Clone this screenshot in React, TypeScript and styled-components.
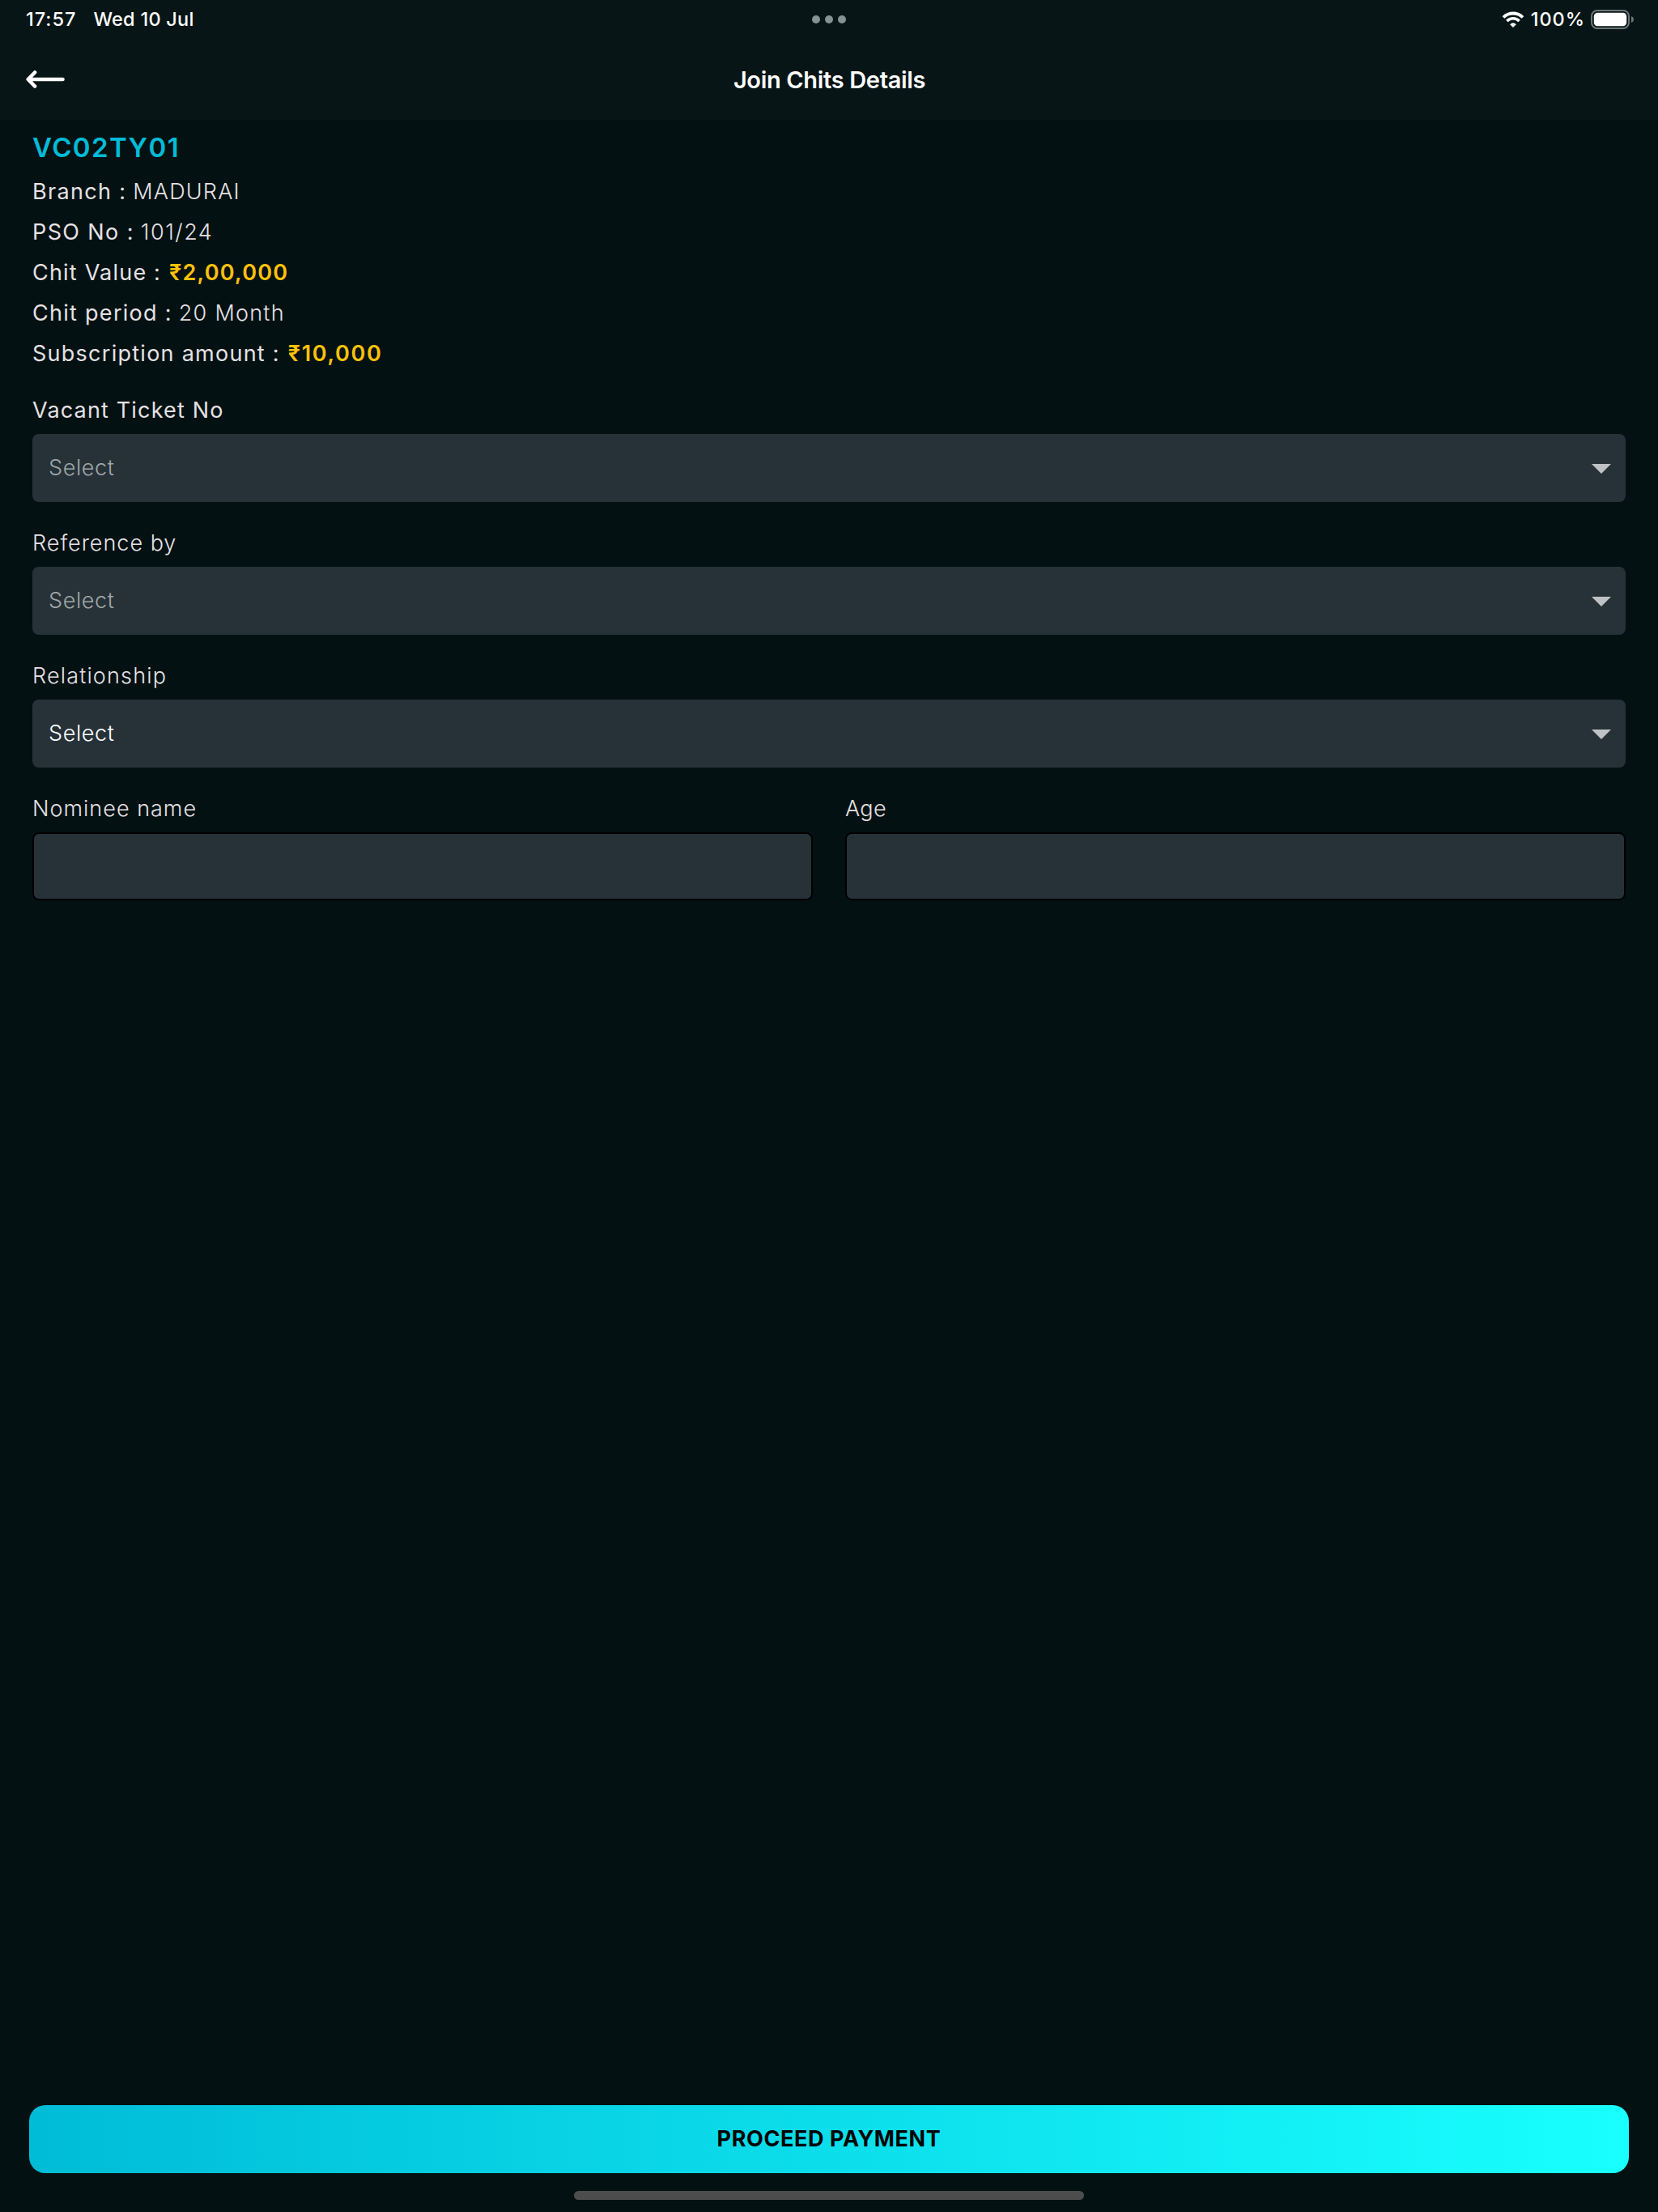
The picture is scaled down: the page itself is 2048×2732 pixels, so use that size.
import React from 'react';
import styled, { createGlobalStyle } from 'styled-components';

const GlobalStyle = createGlobalStyle`
  *, *::before, *::after {
    box-sizing: border-box;
  }
  body {
    margin: 0;
    background-color: #031112;
    font-family: Inter, 'Liberation Sans', sans-serif;
    -webkit-font-smoothing: antialiased;
  }
`;

const Screen = styled.div`
  display: flex;
  flex-direction: column;
  width: 2048px;
  height: 2732px;
  background-color: #031112;
  color: #e6e1e5;
`;

const TopArea = styled.header`
  height: 148px;
  background-color: #071516;
  color: #ffffff;
`;

const StatusBar = styled.div`
  display: grid;
  grid-template-columns: 1fr auto 1fr;
  align-items: center;
  height: 48px;
  padding: 0 30px 0 32px;
  font-size: 23.5px;
  font-weight: 500;
  line-height: 28px;
`;

const StatusLeft = styled.div`
  display: flex;
  gap: 21px;
`;

const StatusRight = styled.div`
  display: flex;
  align-items: center;
  justify-content: flex-end;
`;

const Dots = styled.div`
  display: flex;
  gap: 6px;
  padding-right: 2px;
`;

const Dot = styled.span`
  width: 10px;
  height: 10px;
  border-radius: 50%;
  background-color: #869393;
`;

const WifiIcon = styled.svg`
  width: 28px;
  height: 21px;
  margin-right: 8px;
`;

const BatteryIcon = styled.svg`
  width: 53px;
  height: 24px;
  margin-left: 7px;
`;

const NavBar = styled.div`
  display: grid;
  grid-template-columns: 1fr auto 1fr;
  align-items: center;
  height: 100px;
  padding: 0 32px;
`;

const BackButton = styled.button`
  display: flex;
  justify-self: start;
  padding: 0;
  border: 0;
  background: none;
`;

const NavTitle = styled.h1`
  margin: 0;
  padding: 2px 0 0 1px;
  font-size: 29px;
  font-weight: 620;
  line-height: 36px;
`;

const Text = styled.span<{ $spacing?: number }>`
  letter-spacing: ${({ $spacing }) => $spacing || 0}px;
  white-space: nowrap;
`;

const Content = styled.main`
  display: flex;
  flex: 1;
  flex-direction: column;
  padding: 6px 40px 0;
`;

const ChitCode = styled.h2`
  height: 58px;
  margin: 0;
  color: #00bcd7;
  font-size: 33px;
  font-weight: 640;
  line-height: 57px;
  letter-spacing: 1.4px;
`;

const DetailRow = styled.div`
  display: flex;
  height: 50px;
  font-size: 27px;
  line-height: 50px;
`;

const DetailLabel = styled(Text)`
  font-weight: 440;
`;

const DetailValue = styled(Text)<{ $amount?: boolean }>`
  margin-left: ${({ $amount }) => ($amount ? 10 : 8)}px;
  color: ${({ $amount }) => ($amount ? '#ffc107' : 'inherit')};
  font-weight: ${({ $amount }) => ($amount ? 560 : 330)};
`;

const Form = styled.form`
  display: flex;
  flex-direction: column;
  gap: 20px;
  margin-top: 14px;
`;

const FieldGroup = styled.div`
  display: grid;
  grid-template-columns: 1fr 1fr;
  gap: 40px;
`;

const Field = styled.div`
  display: flex;
  flex-direction: column;
`;

const FieldLabel = styled.label<{ $strong?: boolean }>`
  height: 60px;
  font-size: 27px;
  font-weight: ${({ $strong }) => ($strong ? 440 : 360)};
  line-height: 62px;
`;

const SelectBox = styled.div<{ $active?: boolean }>`
  display: flex;
  align-items: center;
  justify-content: space-between;
  height: 84px;
  padding: 0 18px 0 20px;
  border-radius: 8px;
  background-color: #273238;
  color: ${({ $active }) => ($active ? '#ffffff' : '#a0a7a8')};
  font-size: 27px;
  font-weight: 360;
  line-height: 84px;
`;

const Caret = styled.span`
  margin-top: 2px;
  border-top: 12px solid #bec2c4;
  border-right: 12px solid transparent;
  border-left: 12px solid transparent;
`;

const Input = styled.input`
  width: 100%;
  height: 84px;
  padding: 0 20px;
  border: 2px solid #000000;
  border-radius: 8px;
  background-color: #273238;
  color: #ffffff;
  font: 400 27px Inter, sans-serif;
`;

const Footer = styled.footer`
  display: flex;
  flex-direction: column;
  align-items: center;
  padding: 0 36px 15px;
`;

const ProceedButton = styled.button`
  width: 100%;
  height: 84px;
  padding: 0 0 2px;
  border: 0;
  border-radius: 20px;
  background: linear-gradient(90deg, #00bcd7, #18ffff);
  color: #000000;
  font-family: Inter, sans-serif;
  font-size: 27px;
  font-weight: 720;
  letter-spacing: 0.6px;
`;

const HomeIndicator = styled.div`
  width: 630px;
  height: 11px;
  margin-top: 22px;
  border-radius: 6px;
  background-color: #4d4d4d;
`;

interface Detail {
  label: string;
  labelSpacing: number;
  value: string;
  valueSpacing: number;
  amount?: boolean;
}

const details: Detail[] = [
  { label: 'Branch :', labelSpacing: 1.32, value: 'MADURAI', valueSpacing: 1.2 },
  { label: 'PSO No :', labelSpacing: 1.39, value: '101/24', valueSpacing: 1.5 },
  { label: 'Chit Value :', labelSpacing: 1.2, value: '₹2,00,000', valueSpacing: 1.26, amount: true },
  { label: 'Chit period :', labelSpacing: 1.28, value: '20 Month', valueSpacing: 1.25 },
  { label: 'Subscription amount :', labelSpacing: 1.26, value: '₹10,000', valueSpacing: 1.66, amount: true },
];

interface SelectItem {
  label: string;
  spacing: number;
  strong?: boolean;
  active?: boolean;
}

const selects: SelectItem[] = [
  { label: 'Vacant Ticket No', spacing: 1.16, strong: true },
  { label: 'Reference by', spacing: 0.98 },
  { label: 'Relationship', spacing: 1.16, active: true },
];

const App: React.FC = () => (
  <React.Fragment>
    <GlobalStyle />
    <Screen>
      <TopArea>
        <StatusBar>
          <StatusLeft>
            <Text $spacing={0.99}>17:57</Text>
            <Text $spacing={0.25}>Wed 10 Jul</Text>
          </StatusLeft>
          <Dots>
            <Dot />
            <Dot />
            <Dot />
          </Dots>
          <StatusRight>
            <WifiIcon viewBox="0 0 28 21" fill="none" stroke="#fff">
              <path d="M1.98 7.48a17 17 0 0 1 24.04 0" strokeWidth="3.8" />
              <path d="M6.4 11.9a10.75 10.75 0 0 1 15.2 0" strokeWidth="3.6" />
              <path d="M14 19.5 10.7 16.2a4.7 4.7 0 0 1 6.6 0Z" fill="#fff" strokeWidth="1" strokeLinejoin="round" />
            </WifiIcon>
            <Text $spacing={0.97}>100%</Text>
            <BatteryIcon viewBox="0 0 53 24">
              <rect x="1" y="1" width="46" height="22" rx="7" fill="none" stroke="#6d7575" strokeWidth="2" />
              <rect x="3.8" y="3.8" width="40.4" height="16.4" rx="4.5" fill="#fff" />
              <path d="M50 8c4 1.2 4 6.8 0 8Z" fill="#6d7575" />
            </BatteryIcon>
          </StatusRight>
        </StatusBar>
        <NavBar>
          <BackButton type="button" aria-label="Back">
            <svg width="48" height="22" viewBox="0 0 48 22" fill="none" stroke="#fff" strokeWidth="4.6" strokeLinecap="round" strokeLinejoin="round">
              <path d="M45.5 11H4M11 2.5 2.7 11l8.3 8.5" />
            </svg>
          </BackButton>
          <NavTitle>
            <Text $spacing={-0.34}>Join Chits Details</Text>
          </NavTitle>
        </NavBar>
      </TopArea>

      <Content>
        <ChitCode>VC02TY01</ChitCode>
        {details.map(({ label, labelSpacing, value, valueSpacing, amount }) => (
          <DetailRow key={label}>
            <DetailLabel $spacing={labelSpacing}>{label}</DetailLabel>
            <DetailValue $spacing={valueSpacing} $amount={amount}>
              {value}
            </DetailValue>
          </DetailRow>
        ))}

        <Form>
          {selects.map(({ label, spacing, strong, active }) => (
            <Field key={label}>
              <FieldLabel $strong={strong}>
                <Text $spacing={spacing}>{label}</Text>
              </FieldLabel>
              <SelectBox $active={active}>
                <Text $spacing={0.6}>Select</Text>
                <Caret />
              </SelectBox>
            </Field>
          ))}
          <FieldGroup>
            <Field>
              <FieldLabel htmlFor="nominee">
                <Text $spacing={1}>Nominee name</Text>
              </FieldLabel>
              <Input id="nominee" />
            </Field>
            <Field>
              <FieldLabel htmlFor="age">
                <Text $spacing={0.3}>Age</Text>
              </FieldLabel>
              <Input id="age" />
            </Field>
          </FieldGroup>
        </Form>
      </Content>

      <Footer>
        <ProceedButton type="button">PROCEED PAYMENT</ProceedButton>
        <HomeIndicator />
      </Footer>
    </Screen>
  </React.Fragment>
);

export default App;
